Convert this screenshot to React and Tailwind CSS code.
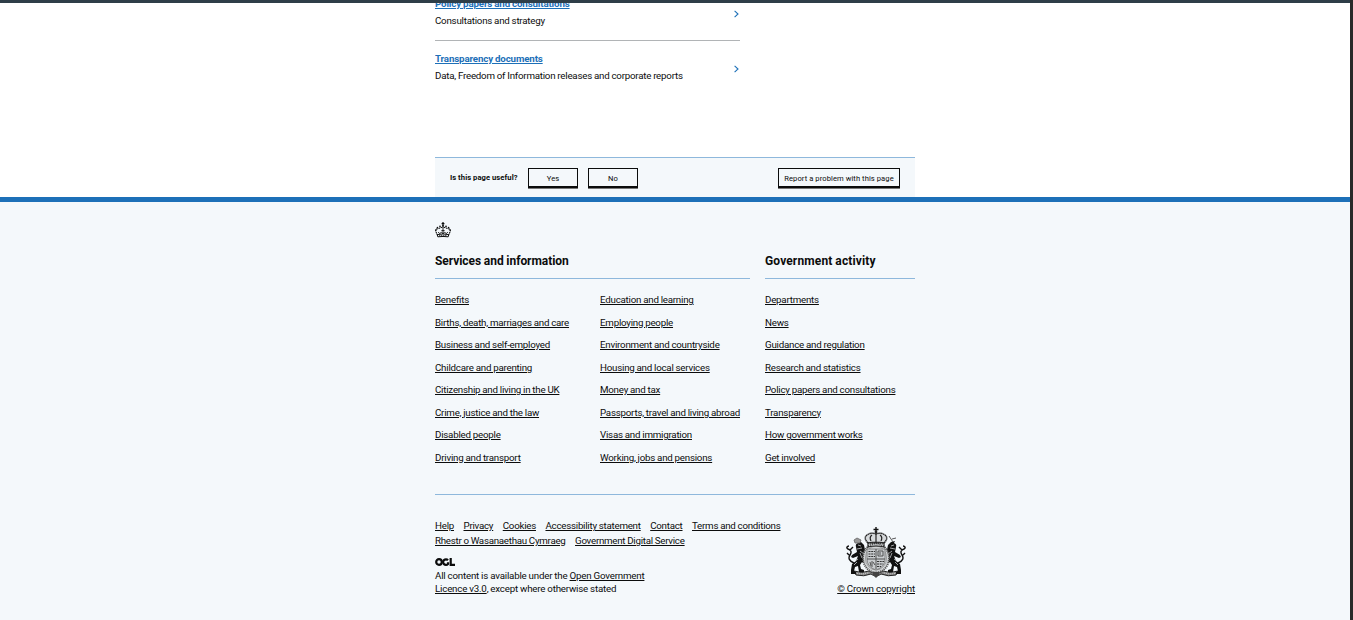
import React from "react";

const services = [
  ["Benefits", "Education and learning"],
  ["Births, death, marriages and care", "Employing people"],
  ["Business and self-employed", "Environment and countryside"],
  ["Childcare and parenting", "Housing and local services"],
  ["Citizenship and living in the UK", "Money and tax"],
  ["Crime, justice and the law", "Passports, travel and living abroad"],
  ["Disabled people", "Visas and immigration"],
  ["Driving and transport", "Working, jobs and pensions"],
];
const activity = [
  "Departments",
  "News",
  "Guidance and regulation",
  "Research and statistics",
  "Policy papers and consultations",
  "Transparency",
  "How government works",
  "Get involved",
];

function Link({ children, className = "" }) {
  return (
    <a href="#" className={`whitespace-nowrap underline decoration-1 underline-offset-[1.2px] ${className}`}>
      {children}
    </a>
  );
}

function DocumentRow({ title, text }) {
  return (
    <li className="flex h-[55px] items-start justify-between border-t border-[#b1b4b6] pt-[9px]">
      <div>
        <Link className="block h-[17px] font-bold leading-[17px] tracking-[-0.15px] text-[#1d70b8]">{title}</Link>
        <p className="h-[17px] leading-[17px]">{text}</p>
      </div>
      <svg className="mr-px mt-[15px] h-[8px] w-[5px]" viewBox="0 0 5 8" fill="none" stroke="#1d70b8" strokeWidth="1.1">
        <path d="M.6.8 4 4 .6 7.2" />
      </svg>
    </li>
  );
}

function FeedbackButton({ children, className = "" }) {
  return (
    <button className={`h-5 border border-b-2 border-[#0b0c0c] bg-[#f4f8fb] pt-[2px] text-[7.6px] leading-[15px] tracking-[0.07px] shadow-[0_1px_0_#777] ${className}`}>
      {children}
    </button>
  );
}

function LinkList({ items }) {
  return (
    <ul className="flex flex-col gap-[7.5px]">
      {items.map((item) => (
        <li key={item} className="h-[15px] leading-[15px]">
          <Link>{item}</Link>
        </li>
      ))}
    </ul>
  );
}

function Crown() {
  return (
    <svg className="h-[16px] w-[16px]" viewBox="0 0 16 16" fill="none" stroke="#0b0c0c">
      <path d="M8 0v4M6.6 1.6h2.8" strokeWidth="1.2" />
      <path d="M2.6 13.4 .9 9.8C.2 7.8 1.4 6.8 3 6.6 5 6 6.4 5.4 8 5M13.4 13.4l1.7-3.6c.7-2-.5-3-2.1-3.2C11 6 9.6 5.4 8 5" strokeWidth="1.1" strokeDasharray="1.5 .7" />
      <path d="M8 5v7M3.2 10l1.3 1.5 2-1.1L8 11.6l1.5-1.2 2 1.1 1.3-1.5M6.4 8.6h3.2" strokeWidth=".9" />
      <path d="M2.3 12.6q5.7-1.3 11.4 0l-.5 2.2q-5.2-.7-10.4 0Z" strokeWidth="1" />
      <path d="M4 13.7q4-.6 8 0" strokeWidth=".9" strokeDasharray="1.2 .7" />
      <g fill="#0b0c0c" stroke="none">
        <circle cx="8" cy="4" r=".9" />
        <circle cx="5" cy="4.4" r=".8" />
        <circle cx="11" cy="4.4" r=".8" />
        <circle cx="2.4" cy="5.5" r=".8" />
        <circle cx="13.6" cy="5.5" r=".8" />
        <circle cx=".9" cy="8" r=".8" />
        <circle cx="15.1" cy="8" r=".8" />
      </g>
    </svg>
  );
}

function Supporter() {
  return (
    <g>
      <path fill="#111" d="M10 20q-1-3 2-4l-1-2 4 1 3 3 1 5 3 3-1 2-3-1 1 5 3 3-1 3-5-3-2 3 1 4 3 1v2h-5l-1-6-3 1-1 4 2 1v2H5v-4l1-6 4-3 2-5-5 2-2-1 1-2 5-3Z" />
      <path fill="none" stroke="#111" strokeWidth="1.4" d="M8 36C3 34 2 31 4 28S5 23 2 22c-2-1-1-3 1-3m1 4 3-3m-4 8-2-2" />
      <path fill="none" stroke="#dfe3e5" strokeWidth=".7" d="m12 18 3 1m-4 3 5-1m-2 3 4 3m-4-1 2 5m-7 3 3-2m-4 6 3-3" />
    </g>
  );
}

function RoyalArms() {
  return (
    <svg className="h-[52px] w-[60px]" viewBox="0 0 60 52">
      <path d="M8 44q8 3 15 0l4 2q3 2 6 0l4-2q7 3 15 0l-2 4q-8 2-15-1-5 4-10 0-7 3-15 1Z" fill="#888" stroke="#222" />
      <path d="M11 46.5q7 1 12-1m26 1q-7 1-12-1" stroke="#ddd" strokeWidth=".9" strokeDasharray="1 1" fill="none" />
      <Supporter />
      <g transform="translate(60 0) scale(-1 1)"><Supporter /></g>
      <path d="m9 16-1-3 3-2 4 2-1 3Z" fill="#999" stroke="#666" strokeWidth=".8" />
      <path d="m43 9 4 6m-1-3 4-1" fill="none" stroke="#444" strokeWidth=".9" />
      <ellipse cx="30" cy="31" rx="13" ry="14.5" fill="#d3d6d8" stroke="#555" strokeWidth="2" strokeDasharray="1.2 .8" />
      <ellipse cx="30" cy="31" rx="10.6" ry="12" fill="none" stroke="#777" strokeWidth=".6" />
      <path d="M21 22h18v10q0 8-9 11-9-3-9-11Z" fill="#c9cccf" stroke="#666" strokeWidth=".7" />
      <path d="M30 22v20M21 32h18" stroke="#444" strokeWidth=".9" />
      <path d="M22.5 24.5H29m-6.5 2.5H29m-6.5 2.5H29M31 34.5h7m-7 2.5h6m-6 2.5h4" stroke="#333" strokeWidth="1" strokeDasharray="2 .7" />
      <path d="M32 24h5v5h-5zm2 1v3M26 34v6m-2-5 1 4m2-4 2 3" fill="none" stroke="#444" strokeWidth=".9" />
      <path d="M22 16q-5-5-1-8 4-3 9-1 5-2 9 1 4 3-1 8Z" fill="#d7dadc" stroke="#222" strokeWidth="1.4" strokeDasharray="1.6 .4" />
      <path d="M30 6v10M25 14q-2-4 1-6m9 6q2-4-1-6M22 16q8-2 16 0v4q-8-2-16 0Z" fill="none" stroke="#222" strokeWidth="1.2" />
      <path d="M30 0v6M27.5 2.5h5" stroke="#111" strokeWidth="1.4" />
      <circle cx="30" cy="5" r="1.4" fill="#222" />
      <path d="M27 45h6v3l-3 3-3-3Z" fill="#444" />
    </svg>
  );
}

export default function App() {
  return (
    <div className="flex h-[620px] w-full overflow-hidden font-['Roboto','Noto_Sans',sans-serif] text-[9.75px] tracking-[-0.23px] text-[#0b0c0c] [word-spacing:-0.2px]">
      <div className="flex flex-1 flex-col bg-white">
        <div className="h-[3px] shrink-0 bg-[#2e3e48]" />
        <main className="mx-auto h-[194px] w-[480px] shrink-0 overflow-hidden">
          <ul className="-mt-[18px] h-[172px] w-[305px]">
            <DocumentRow title="Policy papers and consultations" text="Consultations and strategy" />
            <DocumentRow title="Transparency documents" text="Data, Freedom of Information releases and corporate reports" />
          </ul>
          <section className="flex h-10 items-start border-t border-[#8eb8dc] bg-[#f4f8fb] pl-[15px] pr-[15px] pt-[10px]">
            <h2 className="w-[78px] whitespace-nowrap text-[7.6px] font-bold leading-[19px] tracking-[0.1px]">Is this page useful?</h2>
            <FeedbackButton className="w-[50px]">Yes</FeedbackButton>
            <FeedbackButton className="ml-[10px] w-[50px]">No</FeedbackButton>
            <FeedbackButton className="ml-auto w-[122px] whitespace-nowrap px-0">Report a problem with this page</FeedbackButton>
          </section>
        </main>
        <footer className="flex-1 border-t-[5px] border-[#1d70b8] bg-[#f4f8fb]">
          <div className="mx-auto w-[480px] pt-5">
            <Crown />
            <nav className="mt-[15px] flex gap-[15px]">
              <section className="w-[315px]">
                <h2 className="h-[26px] border-b border-[#8eb8dc] text-[12px] font-bold leading-4 tracking-[-0.05px]">Services and information</h2>
                <div className="mt-[13px] grid grid-cols-2 gap-[15px]">
                  <LinkList items={services.map((pair) => pair[0])} />
                  <LinkList items={services.map((pair) => pair[1])} />
                </div>
              </section>
              <section className="w-[150px]">
                <h2 className="mb-[13px] h-[26px] border-b border-[#8eb8dc] text-[12px] font-bold leading-4 tracking-[0.13px]">Government activity</h2>
                <LinkList items={activity} />
              </section>
            </nav>
            <div className="mt-[29.5px] flex justify-between border-t border-[#8eb8dc] pt-[23px]">
              <div>
                <div className="flex h-[15px] gap-[9.5px] leading-[15px] tracking-[-0.25px]">
                  {["Help", "Privacy", "Cookies", "Accessibility statement", "Contact", "Terms and conditions"].map((t) => <Link key={t}>{t}</Link>)}
                </div>
                <div className="flex h-[15px] gap-[9.5px] leading-[15px] tracking-[-0.27px]">
                  <Link>Rhestr o Wasanaethau Cymraeg</Link>
                  <Link>Government Digital Service</Link>
                </div>
                <svg className="mt-[10px] h-[8px] w-[21px]" viewBox="0 0 21 8" fill="none" stroke="#0b0c0c" strokeWidth="2.2">
                  <circle cx="4" cy="4" r="2.8" />
                  <path d="M13 2.2a2.8 2.8 0 1 0 0 3.8V4.2M15.7 0v6.8H20" />
                </svg>
                <p className="mt-[3px] leading-[13px] tracking-[-0.2px]">
                  All content is available under the <Link>Open Government</Link>
                  <br />
                  <Link>Licence v3.0</Link>, except where otherwise stated
                </p>
              </div>
              <div className="-ml-10 flex flex-col items-end pt-[9px]">
                <div className="mr-[9px]"><RoyalArms /></div>
                <Link className="mt-[3px] leading-[13px] tracking-[-0.15px]">© Crown copyright</Link>
              </div>
            </div>
          </div>
        </footer>
      </div>
      <div className="w-[3px] shrink-0 bg-[#292929]" />
    </div>
  );
}
